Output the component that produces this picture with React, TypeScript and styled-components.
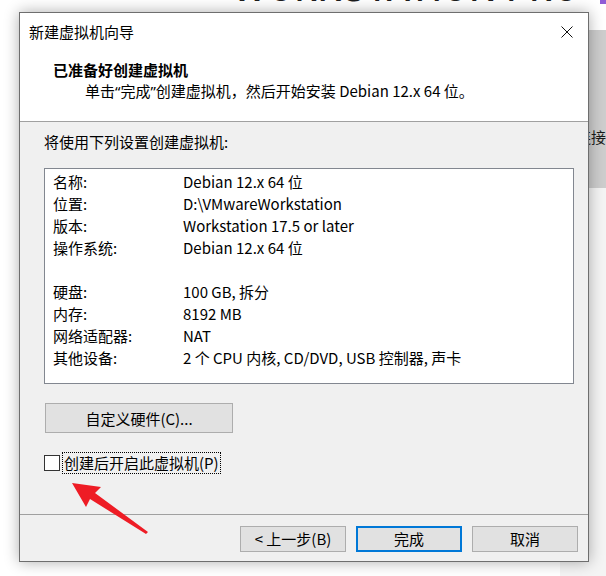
import React from "react";
import styled, { createGlobalStyle } from "styled-components";

const GlobalStyle = createGlobalStyle`
  html, body { margin: 0; padding: 0; background: #ffffff; }
  body { font-family: "Noto Sans CJK SC", "Noto Sans", sans-serif; overflow: hidden; }
  * { box-sizing: border-box; }
`;

const Page = styled.div`
  position: relative;
  width: 606px;
  height: 576px;
  overflow: hidden;
  background: #ffffff;
  padding: 12px 0 0 19px;
`;

const BrandText = styled.div`
  position: absolute;
  left: 232px;
  top: -29px;
  font-family: "Inter", "Liberation Sans", sans-serif;
  font-size: 35px;
  line-height: 35px;
  font-weight: 500;
  letter-spacing: 0.6px;
  color: #1d1d1d;
  white-space: nowrap;
`;

const BrandMark = styled.div`
  position: absolute;
  left: 600px;
  top: -10px;
  width: 6px;
  height: 14px;
  background: #8f5cd6;
`;

const SidePanel = styled.div`
  position: absolute;
  left: 560px;
  top: 30px;
  width: 60px;
  height: 158px;
  background: #cdcdcd;
  display: flex;
  align-items: flex-start;
  padding: 97px 0 0 16px;
  font-size: 15px;
  line-height: 20px;
  color: #1a1a1a;
`;

const SideBelow = styled.div`
  position: absolute;
  left: 560px;
  top: 188px;
  width: 60px;
  height: 400px;
  background: #f4f4f4;
`;

const Dialog = styled.div`
  position: relative;
  z-index: 1;
  width: 570px;
  height: 550px;
  border: 1px solid #6e6e6e;
  background: #f0f0f0;
  box-shadow: 0 0 14px rgba(0, 0, 0, 0.32);
  display: flex;
  flex-direction: column;
  color: #000;
  font-size: 15px;
`;

const Header = styled.div`
  background: #ffffff;
  height: 109px;
  border-bottom: 1px solid #a0a0a0;
  display: flex;
  flex-direction: column;
`;

const TitleBar = styled.div`
  height: 38px;
  display: flex;
  align-items: center;
  justify-content: space-between;
  padding: 0 15px 0 9px;
  line-height: 20px;
`;

const CloseIcon = styled.svg`
  width: 12px;
  height: 12px;
  display: block;
`;

const Heading = styled.div`
  margin-top: 9px;
  padding-left: 33px;
  font-weight: 700;
  line-height: 20px;
`;

const Subtitle = styled.div`
  margin-top: 1px;
  padding-left: 65px;
  line-height: 20px;
`;

const Quote = styled.span`
  font-family: "Noto Sans", sans-serif;
`;

const Body = styled.div`
  flex: 1;
  display: flex;
  flex-direction: column;
  padding: 10px 14px 0 24px;
`;

const Intro = styled.div`
  line-height: 20px;
`;

const SummaryBox = styled.div`
  margin-top: 16px;
  height: 216px;
  background: #ffffff;
  border: 1px solid #828790;
  padding: 2px 8px 0 8px;
  display: grid;
  grid-template-columns: 130px 1fr;
  grid-auto-rows: 22px;
  align-items: center;
  line-height: 20px;
`;

const Spacer = styled.div`
  grid-column: 1 / span 2;
`;

const WideButton = styled.button`
  margin-top: 19px;
  margin-left: 1px;
  width: 188px;
  height: 30px;
  background: #e1e1e1;
  border: 1px solid #adadad;
  font-family: inherit;
  font-size: 15px;
  color: #000;
  padding: 0;
`;

const CheckRow = styled.label`
  margin-top: 20px;
  display: flex;
  align-items: center;
  gap: 3px;
  height: 20px;
`;

const CheckBox = styled.span`
  flex: none;
  width: 16px;
  height: 16px;
  border: 1px solid #333333;
  background: #ffffff;
`;

const CheckLabel = styled.span`
  outline: 1px dotted #000;
  line-height: 20px;
  padding: 0 1px;
  white-space: nowrap;
`;

const Divider = styled.div`
  height: 1px;
  background: #a0a0a0;
  margin-top: auto;
`;

const Footer = styled.div`
  display: flex;
  justify-content: flex-end;
  gap: 10px;
  padding: 11px 10px 9px 0;
`;

const FooterButton = styled.button<{ $primary?: boolean }>`
  width: 106px;
  height: 26px;
  background: #e1e1e1;
  border: ${(p) => (p.$primary ? "2px solid #0078d7" : "1px solid #adadad")};
  font-family: inherit;
  font-size: 15px;
  color: #000;
  padding: 0;
  line-height: 20px;
`;

const ArrowOverlay = styled.svg`
  position: absolute;
  left: 0;
  top: 0;
  width: 606px;
  height: 576px;
  z-index: 2;
  pointer-events: none;
`;

const rows: ([string, string] | null)[] = [
  ["名称:", "Debian 12.x 64 位"],
  ["位置:", "D:\\VMwareWorkstation"],
  ["版本:", "Workstation 17.5 or later"],
  ["操作系统:", "Debian 12.x 64 位"],
  null,
  ["硬盘:", "100 GB, 拆分"],
  ["内存:", "8192 MB"],
  ["网络适配器:", "NAT"],
  ["其他设备:", "2 个 CPU 内核, CD/DVD, USB 控制器, 声卡"],
];

export default function App() {
  return (
    <>
      <GlobalStyle />
      <Page>
        <BrandText>WORKSTATION PRO</BrandText>
        <BrandMark />
        <SidePanel>连接</SidePanel>
        <SideBelow />
        <Dialog>
          <Header>
            <TitleBar>
              <span>新建虚拟机向导</span>
              <CloseIcon viewBox="0 0 12 12">
                <path d="M0.5 0.5 L11.5 11.5 M11.5 0.5 L0.5 11.5" stroke="#111" strokeWidth="1" />
              </CloseIcon>
            </TitleBar>
            <Heading>已准备好创建虚拟机</Heading>
            <Subtitle>
              单击<Quote>“</Quote>完成<Quote>”</Quote>创建虚拟机，然后开始安装 Debian 12.x 64 位。
            </Subtitle>
          </Header>
          <Body>
            <Intro>将使用下列设置创建虚拟机:</Intro>
            <SummaryBox>
              {rows.map((r, i) =>
                r ? (
                  <React.Fragment key={i}>
                    <span>{r[0]}</span>
                    <span>{r[1]}</span>
                  </React.Fragment>
                ) : (
                  <Spacer key={i} />
                )
              )}
            </SummaryBox>
            <div>
              <WideButton>自定义硬件(C)...</WideButton>
            </div>
            <CheckRow>
              <CheckBox />
              <CheckLabel>创建后开启此虚拟机(P)</CheckLabel>
            </CheckRow>
          </Body>
          <Divider />
          <Footer>
            <FooterButton>&lt; 上一步(B)</FooterButton>
            <FooterButton $primary>完成</FooterButton>
            <FooterButton>取消</FooterButton>
          </Footer>
        </Dialog>
        <ArrowOverlay viewBox="0 0 606 576">
          <polygon
            points="72,483 101,487 95,493 148,532 146,534 90,499 86,507"
            fill="#ee1c25"
          />
        </ArrowOverlay>
      </Page>
    </>
  );
}
